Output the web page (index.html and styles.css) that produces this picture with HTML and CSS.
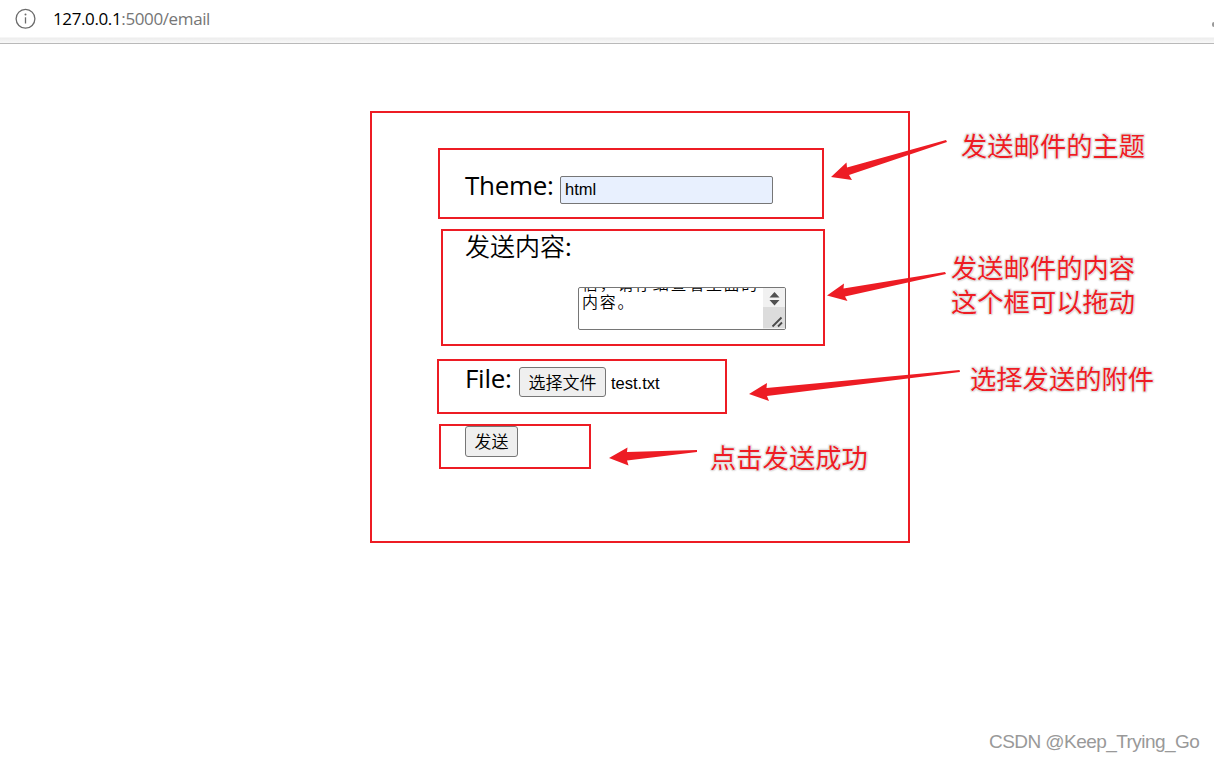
FILE: index.html
```html
<!DOCTYPE html>
<html lang="zh">
<head>
<meta charset="utf-8">
<title>email</title>
<link rel="stylesheet" href="styles.css">
</head>
<body>
<header class="bar">
  <svg class="info" width="22" height="22" viewBox="0 0 22 22" fill="none" stroke="#6b6b6b"><circle cx="10.500" cy="10.800" r="9.400" stroke-width="1.300"/><path d="M10.500 9.300v6.200" stroke-width="1.300"/><circle cx="10.500" cy="6.600" r="1" fill="#6b6b6b" stroke="none"/></svg>
  <div class="url"><span class="host">127.0.0.1</span>:5000/email</div>
  <i class="edge"></i>
</header>
<main class="form">
  <div class="row theme"><label class="lbl lbl-theme">Theme:</label><div class="input">html</div></div>
  <div class="row content"><label class="lbl cjk">发送内容:</label></div>
  <div class="area">
    <div class="area-text">信，请仔细查看里面的<br>内容。</div>
    <div class="scroll">
      <svg width="22" height="19" viewBox="0 0 22 19"><path d="M11.500 4l5 5.500h-10zM11.500 17.500l5-5.500h-10z" fill="#505050"/></svg>
      <svg class="grip" width="22" height="21" viewBox="0 0 22 21"><path d="M9.500 19.500L18.500 10.500M15 19.500l4-4" stroke="#4a4a4a" stroke-width="1.800"/></svg>
    </div>
  </div>
  <div class="row file"><label class="lbl lbl-file">File:</label><div class="btn choose">选择文件</div><span class="filename">test.txt</span></div>
  <div class="btn send">发送</div>
</main>
<div class="notes">
  <div class="box box-all"></div>
  <div class="box box-theme"></div>
  <div class="box box-content"></div>
  <div class="box box-file"></div>
  <div class="box box-send"></div>
  <svg class="arrows" width="1214" height="761" viewBox="0 0 1214 761" fill="#ed1c24">
    <path d="M831 177L846.500 162.500L847 167.500L946 140L947 142L849 175L852 180Z"/>
    <path d="M827 295.500L844 283.500L843.500 288.500L945 272L946 274L845 296.500L847.500 301Z"/>
    <path d="M749 394L767 383L766.500 388L959.500 370L960 372L767 396L769 401Z"/>
    <path d="M609 458L627.500 447.500L627 452L697 450L697 452L627 460.500L628.500 465.500Z"/>
  </svg>
  <p class="note n1">发送邮件的主题</p>
  <p class="note n2">发送邮件的内容<br>这个框可以拖动</p>
  <p class="note n3">选择发送的附件</p>
  <p class="note n4">点击发送成功</p>
  <p class="mark">CSDN @Keep_Trying_Go</p>
</div>
</body>
</html>
```
FILE: styles.css
```css
* { box-sizing: border-box; }
body { margin: 0; width: 1214px; height: 761px; overflow: hidden; position: relative; background: #fff; color: #000; font-family: "Open Sans", "Noto Sans CJK SC", sans-serif; }
.bar { height: 44px; display: flex; align-items: flex-start; padding: 8px 0 0 15px; border-bottom: 1px solid #b9b9b9; background: linear-gradient(#fff 37px, #ededed 38px, #f8f8f8 43px); }
.info { flex: none; }
.url { margin-left: 16px; height: 22px; line-height: 22px; font-family: "Open Sans", sans-serif; font-size: 17px; color: #767676; white-space: nowrap; letter-spacing: -.38px; }
.host { color: #000; }
.edge { margin: 14px 0 0 auto; width: 2px; height: 5px; background: #999; border-radius: 2px 0 0 2px; }
.form { padding: 124px 0 0 465px; }
.row { display: flex; align-items: flex-start; white-space: nowrap; }
.lbl { font-family: "Open Sans", "Noto Sans CJK SC", sans-serif; font-size: 26px; line-height: 34px; letter-spacing: -.3px; }
.theme { height: 61px; }
.lbl-theme { width: 95px; }
.input { margin-top: 8px; width: 213px; height: 28px; border: 1px solid #767676; border-radius: 2px; background: #e8f0fe; padding-left: 4px; font: 16.500px/25px "Liberation Sans", sans-serif; }
.content { height: 58px; }
.cjk { font-family: "Noto Sans CJK SC", sans-serif; font-size: 25px; font-weight: 350; line-height: 32px; letter-spacing: 0; }
.area { margin-left: 113px; width: 208px; height: 43px; border: 1px solid #767676; border-radius: 2px; display: flex; justify-content: space-between; overflow: hidden; }
.area-text { margin: -14px 0 0 3px; white-space: nowrap; font: 350 16px/18px "Noto Sans CJK SC", sans-serif; letter-spacing: 1.700px; width: 182px; height: 40px; }
.scroll { width: 22px; height: 41px; flex: none; background: #f1f1f1; display: flex; flex-direction: column; }
.grip { background: #dcdcdc; }
.scroll svg { flex: none; }
.file { margin-top: 31px; height: 65px; }
.lbl-file { width: 54px; }
.btn { border: 1px solid #767676; border-radius: 3px; background: #efefef; text-align: center; font: 350 17px/28px "Noto Sans CJK SC", sans-serif; }
.choose { margin-top: 6px; width: 87px; height: 30px; }
.filename { margin: 10px 0 0 5px; font: 16.500px/25px "Liberation Sans", sans-serif; }
.send { width: 53px; height: 31px; }
.notes { position: absolute; inset: 0; }
.box { position: absolute; border: 2px solid #ed1c24; }
.box-all { left: 370px; top: 111px; width: 540px; height: 432px; }
.box-theme { left: 438px; top: 148px; width: 386px; height: 71px; }
.box-content { left: 441px; top: 229px; width: 384px; height: 117px; }
.box-file { left: 437px; top: 359px; width: 290px; height: 55px; }
.box-send { left: 439px; top: 424px; width: 152px; height: 45px; }
.arrows { position: absolute; left: 0; top: 0; }
.note { position: absolute; margin: 0; white-space: nowrap; color: #ed1c24; font: 400 26.300px/34px "Noto Sans CJK SC", sans-serif; text-shadow: 0 0 1px #fff, 1px 1px 1px #ddd, -1px -1px 1px #ddd, 1px -1px 1px #ddd, -1px 1px 1px #ddd, 0 0 3px #ccc; }
.n1 { left: 961px; top: 128px; }
.n2 { left: 951px; top: 250px; }
.n3 { left: 970px; top: 361px; }
.n4 { left: 710px; top: 440px; }
.mark { position: absolute; margin: 0; left: 989px; top: 730px; white-space: nowrap; font: 19px/24px "Liberation Sans", sans-serif; letter-spacing: -.56px; color: #999; }
```
